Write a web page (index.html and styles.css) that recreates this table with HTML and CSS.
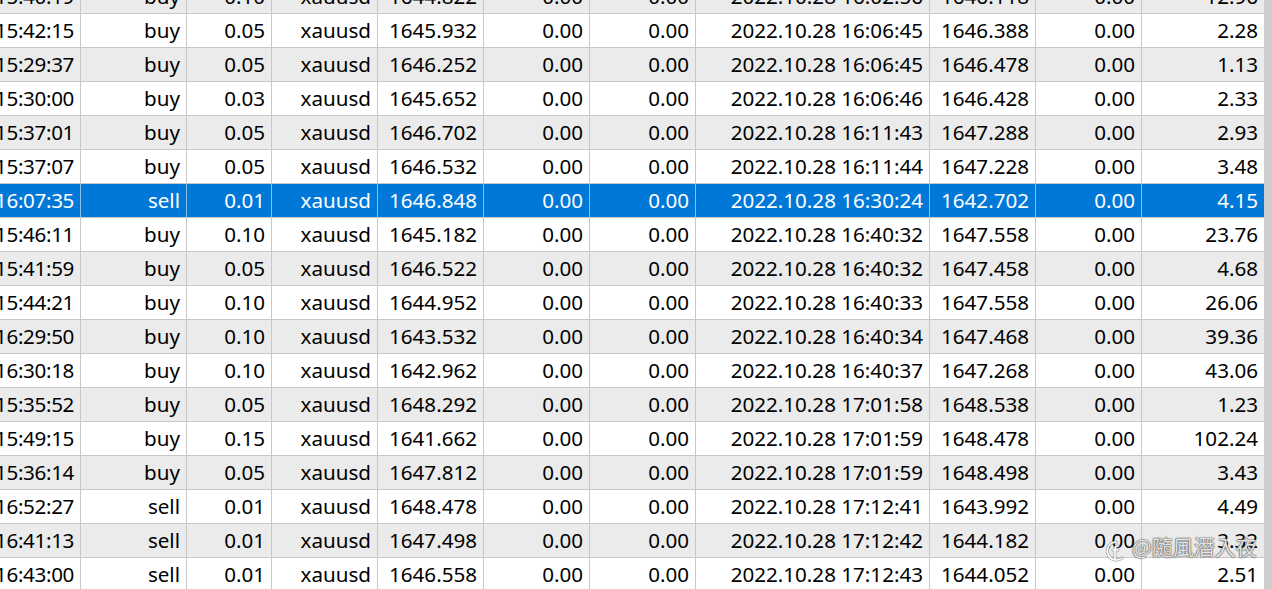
FILE: index.html
```html
<!DOCTYPE html>
<html>
<head>
<meta charset="utf-8">
<link rel="stylesheet" href="styles.css">
</head>
<body>
<div class="viewport">
  <div class="grid-area">
    <div class="rows">
      <div class="row alt"><div class="c">2022.10.28 15:40:19</div><div class="c">buy</div><div class="c">0.10</div><div class="c">xauusd</div><div class="c">1644.822</div><div class="c">0.00</div><div class="c">0.00</div><div class="c">2022.10.28 16:02:56</div><div class="c">1646.118</div><div class="c">0.00</div><div class="c">12.96</div></div>
      <div class="row"><div class="c">2022.10.28 15:42:15</div><div class="c">buy</div><div class="c">0.05</div><div class="c">xauusd</div><div class="c">1645.932</div><div class="c">0.00</div><div class="c">0.00</div><div class="c">2022.10.28 16:06:45</div><div class="c">1646.388</div><div class="c">0.00</div><div class="c">2.28</div></div>
      <div class="row alt"><div class="c">2022.10.28 15:29:37</div><div class="c">buy</div><div class="c">0.05</div><div class="c">xauusd</div><div class="c">1646.252</div><div class="c">0.00</div><div class="c">0.00</div><div class="c">2022.10.28 16:06:45</div><div class="c">1646.478</div><div class="c">0.00</div><div class="c">1.13</div></div>
      <div class="row"><div class="c">2022.10.28 15:30:00</div><div class="c">buy</div><div class="c">0.03</div><div class="c">xauusd</div><div class="c">1645.652</div><div class="c">0.00</div><div class="c">0.00</div><div class="c">2022.10.28 16:06:46</div><div class="c">1646.428</div><div class="c">0.00</div><div class="c">2.33</div></div>
      <div class="row alt"><div class="c">2022.10.28 15:37:01</div><div class="c">buy</div><div class="c">0.05</div><div class="c">xauusd</div><div class="c">1646.702</div><div class="c">0.00</div><div class="c">0.00</div><div class="c">2022.10.28 16:11:43</div><div class="c">1647.288</div><div class="c">0.00</div><div class="c">2.93</div></div>
      <div class="row"><div class="c">2022.10.28 15:37:07</div><div class="c">buy</div><div class="c">0.05</div><div class="c">xauusd</div><div class="c">1646.532</div><div class="c">0.00</div><div class="c">0.00</div><div class="c">2022.10.28 16:11:44</div><div class="c">1647.228</div><div class="c">0.00</div><div class="c">3.48</div></div>
      <div class="row sel"><div class="c">2022.10.28 16:07:35</div><div class="c">sell</div><div class="c">0.01</div><div class="c">xauusd</div><div class="c">1646.848</div><div class="c">0.00</div><div class="c">0.00</div><div class="c">2022.10.28 16:30:24</div><div class="c">1642.702</div><div class="c">0.00</div><div class="c">4.15</div></div>
      <div class="row"><div class="c">2022.10.28 15:46:11</div><div class="c">buy</div><div class="c">0.10</div><div class="c">xauusd</div><div class="c">1645.182</div><div class="c">0.00</div><div class="c">0.00</div><div class="c">2022.10.28 16:40:32</div><div class="c">1647.558</div><div class="c">0.00</div><div class="c">23.76</div></div>
      <div class="row alt"><div class="c">2022.10.28 15:41:59</div><div class="c">buy</div><div class="c">0.05</div><div class="c">xauusd</div><div class="c">1646.522</div><div class="c">0.00</div><div class="c">0.00</div><div class="c">2022.10.28 16:40:32</div><div class="c">1647.458</div><div class="c">0.00</div><div class="c">4.68</div></div>
      <div class="row"><div class="c">2022.10.28 15:44:21</div><div class="c">buy</div><div class="c">0.10</div><div class="c">xauusd</div><div class="c">1644.952</div><div class="c">0.00</div><div class="c">0.00</div><div class="c">2022.10.28 16:40:33</div><div class="c">1647.558</div><div class="c">0.00</div><div class="c">26.06</div></div>
      <div class="row alt"><div class="c">2022.10.28 16:29:50</div><div class="c">buy</div><div class="c">0.10</div><div class="c">xauusd</div><div class="c">1643.532</div><div class="c">0.00</div><div class="c">0.00</div><div class="c">2022.10.28 16:40:34</div><div class="c">1647.468</div><div class="c">0.00</div><div class="c">39.36</div></div>
      <div class="row"><div class="c">2022.10.28 16:30:18</div><div class="c">buy</div><div class="c">0.10</div><div class="c">xauusd</div><div class="c">1642.962</div><div class="c">0.00</div><div class="c">0.00</div><div class="c">2022.10.28 16:40:37</div><div class="c">1647.268</div><div class="c">0.00</div><div class="c">43.06</div></div>
      <div class="row alt"><div class="c">2022.10.28 15:35:52</div><div class="c">buy</div><div class="c">0.05</div><div class="c">xauusd</div><div class="c">1648.292</div><div class="c">0.00</div><div class="c">0.00</div><div class="c">2022.10.28 17:01:58</div><div class="c">1648.538</div><div class="c">0.00</div><div class="c">1.23</div></div>
      <div class="row"><div class="c">2022.10.28 15:49:15</div><div class="c">buy</div><div class="c">0.15</div><div class="c">xauusd</div><div class="c">1641.662</div><div class="c">0.00</div><div class="c">0.00</div><div class="c">2022.10.28 17:01:59</div><div class="c">1648.478</div><div class="c">0.00</div><div class="c">102.24</div></div>
      <div class="row alt"><div class="c">2022.10.28 15:36:14</div><div class="c">buy</div><div class="c">0.05</div><div class="c">xauusd</div><div class="c">1647.812</div><div class="c">0.00</div><div class="c">0.00</div><div class="c">2022.10.28 17:01:59</div><div class="c">1648.498</div><div class="c">0.00</div><div class="c">3.43</div></div>
      <div class="row"><div class="c">2022.10.28 16:52:27</div><div class="c">sell</div><div class="c">0.01</div><div class="c">xauusd</div><div class="c">1648.478</div><div class="c">0.00</div><div class="c">0.00</div><div class="c">2022.10.28 17:12:41</div><div class="c">1643.992</div><div class="c">0.00</div><div class="c">4.49</div></div>
      <div class="row alt"><div class="c">2022.10.28 16:41:13</div><div class="c">sell</div><div class="c">0.01</div><div class="c">xauusd</div><div class="c">1647.498</div><div class="c">0.00</div><div class="c">0.00</div><div class="c">2022.10.28 17:12:42</div><div class="c">1644.182</div><div class="c">0.00</div><div class="c">3.32</div></div>
      <div class="row"><div class="c">2022.10.28 16:43:00</div><div class="c">sell</div><div class="c">0.01</div><div class="c">xauusd</div><div class="c">1646.558</div><div class="c">0.00</div><div class="c">0.00</div><div class="c">2022.10.28 17:12:43</div><div class="c">1644.052</div><div class="c">0.00</div><div class="c">2.51</div></div>
    </div>
  </div>
  <div class="scrollbar"></div>
  <div class="watermark">
    <svg class="wm-icon" width="22" height="24" viewBox="0 0 22 24">
      <g fill="none" stroke="#7a7a7a" stroke-width="3.2" stroke-linecap="round" opacity="0.6">
        <path d="M11 3 A9 9 0 1 0 17 19"/>
        <path d="M13 7 C10.5 7 10 8.5 10 10 L10 20 M8 11 L13 11"/>
      </g>
      <g fill="none" stroke="#ffffff" stroke-width="1.6" stroke-linecap="round">
        <path d="M11 3 A9 9 0 1 0 17 19"/>
        <path d="M13 7 C10.5 7 10 8.5 10 10 L10 20 M8 11 L13 11"/>
      </g>
    </svg>
    <span class="wm-text">@隨風潛入夜</span>
  </div>
</div>
</body>
</html>
```

FILE: styles.css
```css
html, body {
  margin: 0;
  padding: 0;
  background: #ffffff;
}

.viewport {
  position: relative;
  display: flex;
  width: 1272px;
  height: 589px;
  overflow: hidden;
}

.grid-area {
  width: 1264px;
  height: 589px;
  overflow: hidden;
  flex: none;
}

.rows {
  margin-left: -154px;
  margin-top: -20px;
  width: 1418px;
}

.row {
  display: grid;
  grid-template-columns: 235px 106px 85px 106px 106px 106px 106px 234px 106px 106px 122px;
  height: 34px;
  background: #ffffff;
}

.row.alt {
  background: #ebebeb;
}

.row.sel {
  background: #0078d7;
  color: #ffffff;
}

.c {
  box-sizing: border-box;
  border-right: 1px solid #c8c8c8;
  border-bottom: 1px solid #c8c8c8;
  padding-right: 6px;
  text-align: right;
  white-space: nowrap;
  overflow: hidden;
  font-family: "Noto Sans", "Open Sans", sans-serif;
  font-size: 20.6px;
  line-height: 33px;
  color: #000000;
}

.c:first-child {
  padding-right: 6px;
  letter-spacing: -0.35px;
}

.row.sel .c {
  color: #ffffff;
  border-right-color: #8fbce8;
}

.c:last-child {
  border-right: none;
}

.scrollbar {
  flex: none;
  width: 8px;
  height: 589px;
  background: #cdcdcd;
}

.watermark {
  position: absolute;
  left: 1105px;
  top: 529px;
  display: flex;
  align-items: center;
  gap: 5px;
}

.wm-icon {
  margin-top: 10px;
}

.wm-text {
  font-family: "Noto Sans CJK TC", "Noto Sans", sans-serif;
  font-size: 21px;
  color: rgba(255, 255, 255, 0.85);
  text-shadow: 0 0 1px #555, 0 0 1px #555, 0 0 2px rgba(0,0,0,0.45);
}
```
